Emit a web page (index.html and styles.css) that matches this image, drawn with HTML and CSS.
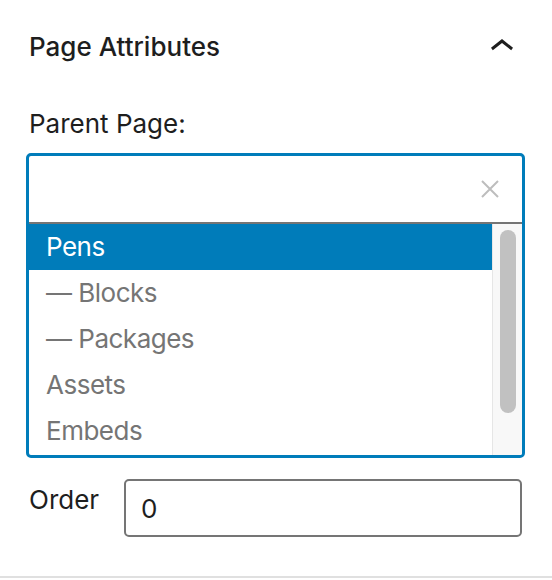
FILE: index.html
```html
<!DOCTYPE html>
<html lang="en">
<head>
<meta charset="utf-8">
<title>Page Attributes</title>
<link rel="stylesheet" href="styles.css">
</head>
<body>
<section class="panel">
  <header class="panel-header">
    <h2 class="panel-title">Page Attributes</h2>
    <svg class="chevron" viewBox="0 0 24 24" width="48" height="48" aria-hidden="true"><path d="M6.5 12.4L12 8l5.5 4.4-.9 1.2L12 10l-4.6 3.6-.9-1.2z"/></svg>
  </header>
  <div class="field-label">Parent Page:</div>
  <div class="combo">
    <div class="combo-input">
      <svg class="clear" viewBox="0 0 18 18" width="18" height="18" aria-hidden="true"><path d="M1 1L17 17M17 1L1 17"/></svg>
    </div>
    <div class="combo-list">
      <ul class="options">
        <li class="option selected">Pens</li>
        <li class="option">— Blocks</li>
        <li class="option">— Packages</li>
        <li class="option">Assets</li>
        <li class="option">Embeds</li>
      </ul>
      <div class="scrollbar"><div class="thumb"></div></div>
    </div>
  </div>
  <div class="order-row">
    <label class="order-label">Order</label>
    <div class="order-input">0</div>
  </div>
</section>
</body>
</html>
```
FILE: styles.css
```css
html, body {
  margin: 0;
  padding: 0;
  background: #ffffff;
}
body {
  font-family: "Inter", "Noto Sans", sans-serif;
  color: #1e1e1e;
}
.panel {
  width: 552px;
  height: 578px;
  box-sizing: border-box;
  padding: 0 27px 0 26px;
  border-bottom: 2px solid #e0e0e0;
}
.panel-header {
  display: flex;
  align-items: center;
  justify-content: space-between;
  padding-top: 23px;
  height: 48px;
}
.panel-title {
  margin: 0 0 0 3px;
  font-size: 26px;
  font-weight: 500;
  line-height: 48px;
}
.chevron {
  fill: #1e1e1e;
  margin-right: -1px;
}
.field-label {
  margin-top: 37px;
  padding-left: 3px;
  font-size: 26px;
  line-height: 32px;
}
.combo {
  margin-top: 13px;
  border: 3px solid #007cba;
  border-radius: 5px;
  overflow: hidden;
}
.combo-input {
  height: 66px;
  display: flex;
  align-items: center;
  justify-content: flex-end;
  padding-right: 23px;
  border-bottom: 2px solid #757575;
}
.clear {
  stroke: #bdbdbd;
  stroke-width: 2;
  fill: none;
}
.combo-list {
  display: flex;
  height: 231px;
}
.options {
  flex: 1;
  list-style: none;
  margin: 0;
  padding: 0;
}
.option {
  height: 46px;
  line-height: 46px;
  padding-left: 17px;
  font-size: 26px;
  letter-spacing: -0.5px;
  color: #757575;
}
.option.selected {
  background: #007cba;
  color: #ffffff;
}
.scrollbar {
  width: 29px;
  background: #f8f8f8;
  border-left: 1px solid #e6e6e6;
  padding-top: 6px;
}
.thumb {
  width: 16px;
  height: 183px;
  margin-left: 7px;
  border-radius: 8px;
  background: #c1c1c1;
}
.order-row {
  display: flex;
  align-items: flex-start;
  margin-top: 21px;
  margin-right: 3px;
}
.order-label {
  width: 98px;
  padding-left: 3px;
  box-sizing: border-box;
  margin-top: 5px;
  font-size: 26px;
  line-height: 32px;
}
.order-input {
  flex: 1;
  height: 58px;
  box-sizing: border-box;
  border: 2px solid #757575;
  border-radius: 5px;
  padding-left: 15px;
  font-size: 26px;
  line-height: 56px;
  color: #1e1e1e;
}
```
